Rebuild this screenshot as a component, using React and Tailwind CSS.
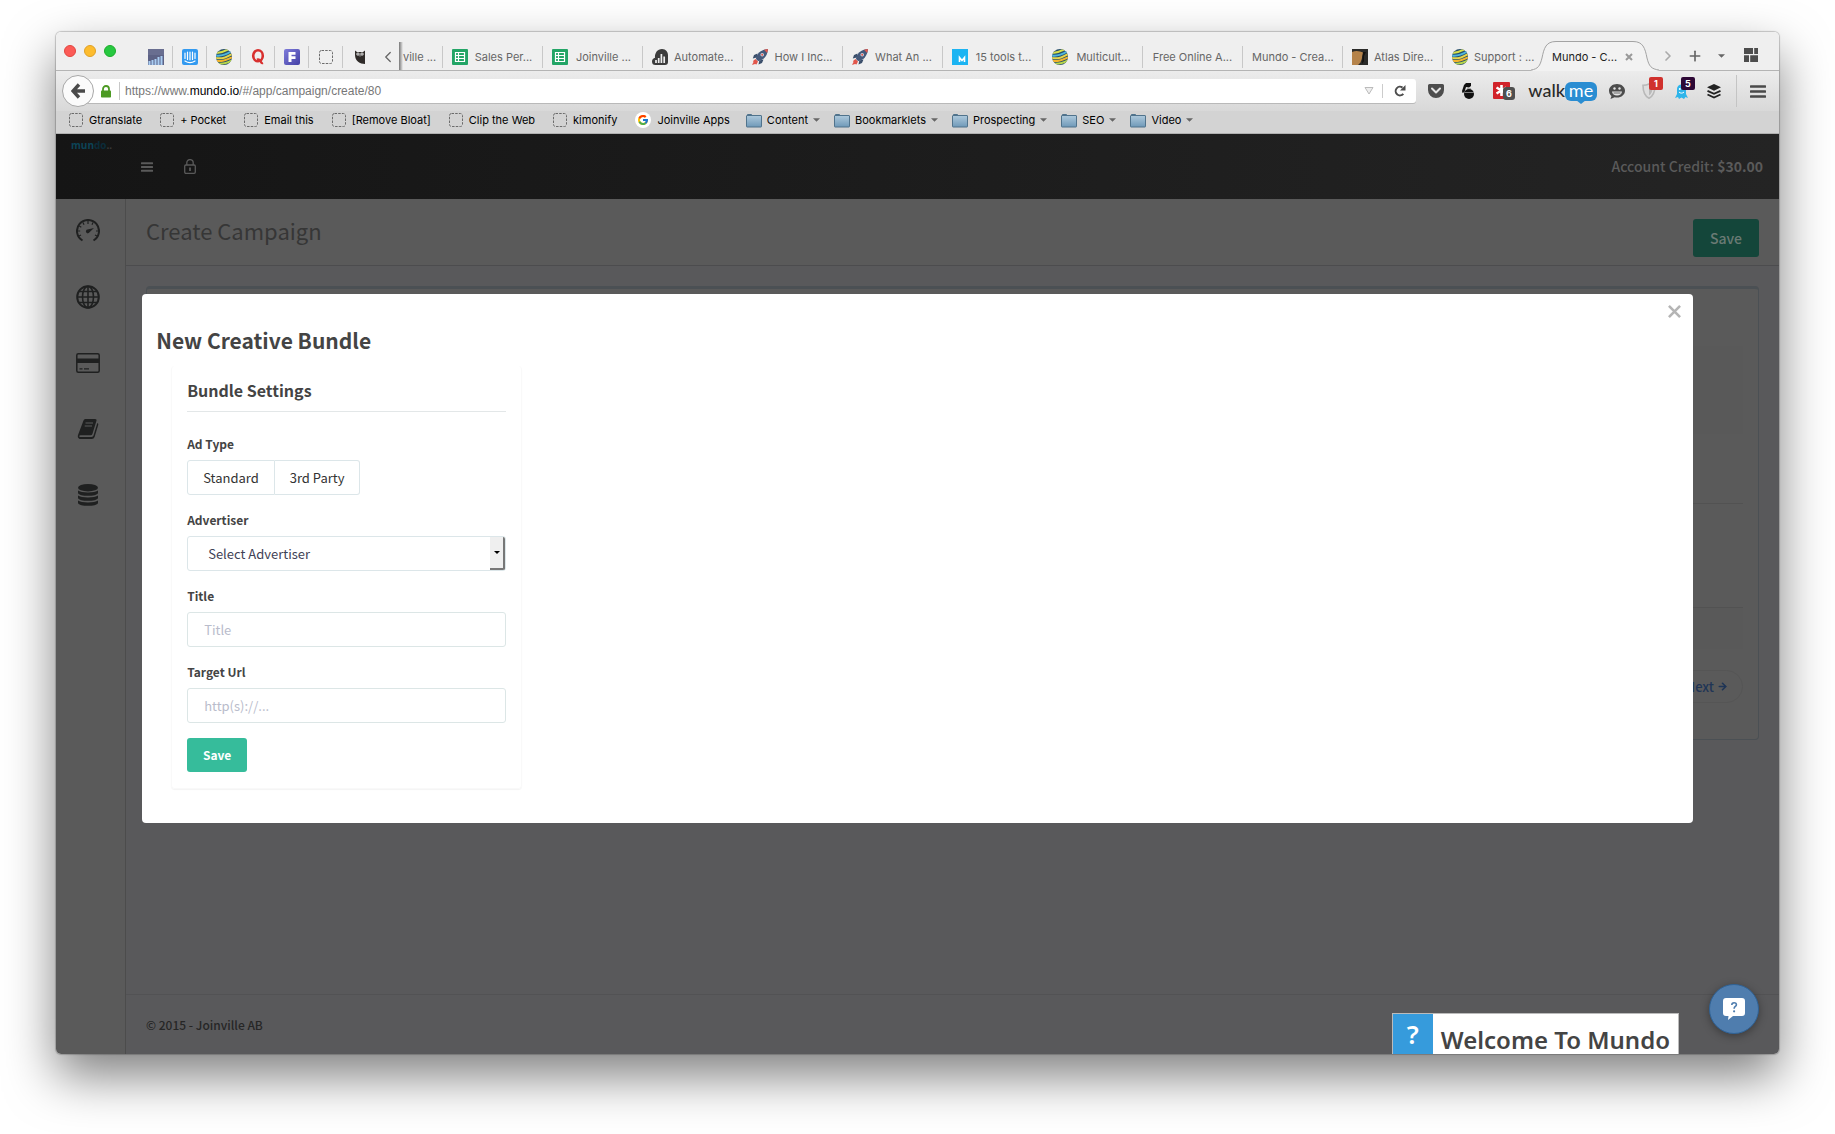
import { useState } from "react";
import { ArrowRight, ChevronLeft, ChevronRight, Plus } from "lucide-react";
import { FcGoogle } from "react-icons/fc";

/* ---------- favicons ---------- */

const AnalyticsIcon = () => (
  <svg viewBox="0 0 16 16" className="size-4 shrink-0">
    <rect width="16" height="16" fill="#5d6285" />
    <path d="M0 1h16M0 3h16M0 5h16" stroke="#777b9b" strokeWidth="1" />
    <path d="M1.500 16v-4M4.500 16v-5M7.500 16v-6M10.500 16v-8M13.500 16v-9" stroke="#a9cdf2" strokeWidth="2" />
  </svg>
);

const IntercomIcon = () => (
  <svg viewBox="0 0 16 16" className="size-4 shrink-0">
    <rect width="16" height="16" rx="2" fill="#339af0" />
    <path d="M3 4v5.500M5.500 3.200v7.300M8 3v7.800M10.500 3.200v7.300M13 4v5.500" stroke="#fff" strokeWidth="1.200" strokeLinecap="round" />
    <path d="M3 12c3 2 7 2 10 0" stroke="#fff" strokeWidth="1.200" fill="none" strokeLinecap="round" />
  </svg>
);

const GlobeStripes = () => (
  <svg viewBox="0 0 16 16" className="size-4 shrink-0">
    <defs>
      <clipPath id="ball"><circle cx="8" cy="8" r="8" /></clipPath>
    </defs>
    <g clipPath="url(#ball)" fill="none" strokeWidth="2">
      <rect width="16" height="16" fill="#29506b" />
      <path d="M0 3.500c5 1 8-1 12-3" stroke="#d7e04a" />
      <path d="M0 6.500c6 1 10-1 15-4" stroke="#4fb6dd" />
      <path d="M0 9c6 1.500 11-1 16-4" stroke="#e6d64a" />
      <path d="M0 11.800c6 1.200 11-1 16-3.500" stroke="#f3b42b" />
      <path d="M1 14.500c5 1 10-.5 15-3" stroke="#b7d64a" />
    </g>
  </svg>
);

const QuoraIcon = () => (
  <svg viewBox="0 0 16 16" className="size-4 shrink-0">
    <ellipse cx="8" cy="6.800" rx="4.800" ry="5.500" fill="none" stroke="#d8302f" strokeWidth="2.600" />
    <path d="M7 10.500c2-.8 3.500 1 4 2.500.4 1 1.300 1.300 2 1" stroke="#d8302f" strokeWidth="2.200" fill="none" />
  </svg>
);

const FIcon = () => (
  <svg viewBox="0 0 16 16" className="size-4 shrink-0">
    <defs>
      <linearGradient id="fbox" x1="0" y1="0" x2="1" y2="1">
        <stop offset="0" stopColor="#7f7cda" />
        <stop offset="1" stopColor="#4340a5" />
      </linearGradient>
    </defs>
    <rect width="16" height="16" rx="2" fill="url(#fbox)" />
    <path d="M4.500 3h7v2.800H7.500v1.400h4V10h-4v3h-3z" fill="#fff" />
  </svg>
);

const DashedIcon = () => (
  <svg viewBox="0 0 14 14" className="size-[14px] shrink-0">
    <rect x=".5" y=".5" width="13" height="13" rx="2" fill="none" stroke="#6b6b6b" strokeDasharray="2.500 1.200" />
  </svg>
);

const OwlIcon = () => (
  <svg viewBox="0 0 16 16" className="size-4 shrink-0">
    <path d="M3 1.500 5 3h6l2-1.500V15c-5 0-10-3-10-9z" fill="#2f2b29" />
    <circle cx="6" cy="5" r="1.600" fill="#fff" />
    <circle cx="10" cy="5" r="1.600" fill="#fff" />
    <circle cx="6" cy="5" r=".7" fill="#222" />
    <circle cx="10" cy="5" r=".7" fill="#222" />
    <path d="m7.300 6.500.7 1.300.7-1.300z" fill="#fff" />
  </svg>
);

const SheetIcon = () => (
  <svg viewBox="0 0 16 16" className="size-4 shrink-0">
    <rect width="16" height="16" rx="1" fill="#23a566" />
    <path d="M3.500 3.500h9v9h-9zM3.500 6.500h9M3.500 9.500h9M6.500 3.500v9" fill="none" stroke="#fff" strokeWidth="1.200" />
  </svg>
);

const CloudChartIcon = () => (
  <svg viewBox="0 0 16 16" className="size-4 shrink-0">
    <path d="M3.500 16A3.500 3.500 0 0 1 0 12.500C0 10.500 1.500 9 3 8.800 2.500 4 5.500 0 10 0c4 0 6 3 6 6.500V13a3 3 0 0 1-3 3z" fill="#3c3c3c" />
    <path d="M4 14v-3M6.700 14V9M9.400 14V5M12.200 14V7.500" stroke="#eee" strokeWidth="1.700" />
  </svg>
);

const RocketIcon = () => (
  <svg viewBox="0 0 16 16" className="size-4 shrink-0">
    <path d="M5.500 4.500 2 6 .8 9.500l4-1zM11.500 10.500 10 14l-3.500 1.500.8-4z" fill="#3b4f6b" />
    <path d="M4 10C4 5 9 .5 16 0c-.5 7-5 12-10 12z" fill="#45597a" />
    <path d="M12 .8 16 0l-.8 4z" fill="#e2574c" />
    <circle cx="10.200" cy="5.800" r="1.800" fill="#cfd6e2" />
    <circle cx="10.200" cy="5.800" r="1" fill="#e2574c" />
    <path d="M3.500 10 1 12l.5 1-1.500 3 3-1 1.500.5L6 12.500z" fill="#e2574c" />
  </svg>
);

const MIcon = () => (
  <svg viewBox="0 0 16 16" className="size-4 shrink-0">
    <rect width="16" height="16" fill="#1cb4f2" />
    <path d="M7.500 13V8.500l2.500 3 2.500-3V13" fill="none" stroke="#fff" strokeWidth="1.600" />
  </svg>
);

const AtlasIcon = () => (
  <svg viewBox="0 0 16 16" className="size-4 shrink-0">
    <rect width="16" height="16" fill="#2b2b29" />
    <path d="M0 3c4-2 8-1 11 .5 0 2-1 3-1 5s-1 3-1.500 5L6 16H0z" fill="#b5834a" />
    <path d="M11 3h3l-2 4v5l-2 3z" fill="#15120f" />
  </svg>
);

/* ---------- browser chrome icons ---------- */

const FolderIcon = () => (
  <svg viewBox="0 0 16 15" className="h-[15px] w-4 shrink-0">
    <defs>
      <linearGradient id="folder" x1="0" y1="0" x2="0" y2="1">
        <stop offset="0" stopColor="#aec9dc" />
        <stop offset="1" stopColor="#6f99b8" />
      </linearGradient>
    </defs>
    <path d="M1.500 3V1.500h4V3" fill="#7fa3bd" stroke="#50738c" />
    <rect x=".5" y="2.500" width="15" height="11.500" rx=".5" fill="url(#folder)" stroke="#50738c" />
  </svg>
);

const Caret = ({ className = "" }) => (
  <svg viewBox="0 0 8 4" className={"h-1 w-[7px] shrink-0 " + className}>
    <path d="M0 0h8L4 4z" fill="#666" />
  </svg>
);

const BackArrow = () => (
  <svg viewBox="0 0 14 16" className="h-4 w-[14px]">
    <path d="M8 1.500 2 8l6 6.500M2.500 8H14" fill="none" stroke="#4a4a4a" strokeWidth="3.400" />
  </svg>
);

const GreenLock = () => (
  <svg viewBox="0 0 10 13" className="h-[13px] w-[10px] shrink-0">
    <path d="M2 6V4a3 3 0 0 1 6 0v2" fill="none" stroke="#4c9a23" strokeWidth="1.800" />
    <rect y="5.500" width="10" height="7" rx=".8" fill="#4c9a23" />
  </svg>
);

const ReloadIcon = () => (
  <svg viewBox="0 0 12 12" className="size-3">
    <path d="M9.300 8.800A4.300 4.300 0 1 1 8.500 2.600" fill="none" stroke="#4d4d4d" strokeWidth="2" />
    <path d="M6 5.500h5.500V0z" fill="#4d4d4d" />
  </svg>
);

const PocketIcon = () => (
  <svg viewBox="0 0 16 14" className="h-[14px] w-4">
    <path d="M1.500 0h13A1.500 1.500 0 0 1 16 1.500V6a8 8 0 0 1-16 0V1.500A1.500 1.500 0 0 1 1.500 0z" fill="#4d4d4d" />
    <path d="m4 4.500 4 4 4-4" fill="none" stroke="#e4e4e4" strokeWidth="2" strokeLinecap="round" strokeLinejoin="round" />
  </svg>
);

const BombIcon = () => (
  <svg viewBox="0 0 12 16" className="h-4 w-3">
    <path d="M4 0h5v3l-2 1.500L4 4 2.500 9 .5 10 0 8l2-6z" fill="#111" />
    <ellipse cx="7" cy="11" rx="5" ry="5" fill="#111" />
    <path d="M2.500 9.500h9.500M5 5.500h4" stroke="#9a9a9a" strokeWidth=".8" />
  </svg>
);

const LastPassIcon = () => (
  <svg viewBox="0 0 22 18" className="h-[18px] w-[22px]">
    <rect width="17" height="17" rx="1" fill="#d1232a" />
    <path d="M8.500 3v11M3.500 5.500l10 6M3.500 11.500l10-6" stroke="#fff" strokeWidth="2.600" />
    <rect x="10" y="5" width="12" height="13" rx="3" fill="#4f4f4f" />
    <text x="16" y="15" textAnchor="middle" fontSize="9" fontWeight="700" fill="#fff" fontFamily="Inter">6</text>
  </svg>
);

const SmileBubble = () => (
  <svg viewBox="0 0 16 15" className="h-[15px] w-4">
    <path d="M8 0c4.500 0 8 2.900 8 6.700s-3.500 6.800-8 6.800c-.8 0-1.600-.1-2.300-.3L1.500 15l1-3C1 10.700 0 8.900 0 6.700 0 2.900 3.500 0 8 0z" fill="#4d4d4d" />
    <path d="M3 7.500h10c-.3 2.500-2.200 4-5 4s-4.700-1.500-5-4z" fill="#e4e4e4" />
    <path d="M4.500 9h7" stroke="#4d4d4d" strokeWidth=".8" />
    <circle cx="5.500" cy="4.500" r="1.200" fill="#e4e4e4" />
    <circle cx="10.500" cy="4.500" r="1.200" fill="#e4e4e4" />
  </svg>
);

const ShieldIcon = () => (
  <svg viewBox="0 0 14 16" className="h-4 w-[14px]">
    <path d="M7 1c2 1 4 1.300 6 1.300C13 9 11.500 13 7 15.300 2.500 13 1 9 1 2.300 3 2.300 5 2 7 1z" fill="#dedede" stroke="#b9b9b9" strokeWidth="1.600" />
    <path d="M7 4v8.500C9.500 11 10.300 8.500 10.500 5 9 5 8 4.600 7 4z" fill="#b9b9b9" />
  </svg>
);

const GhostIcon = () => (
  <svg viewBox="0 0 13 16" className="h-4 w-[13px]">
    <path d="M2 6a4.500 4.500 0 0 1 9 0v5l2 4-2.500-1L9 16l-2.500-1.500L4 16l-1-2-3 1 2-4z" fill="#2fb5ea" />
    <circle cx="4.800" cy="6" r="1" fill="#fff" />
    <path d="M4 9c1.500 1.500 3.500 1.500 5 0" stroke="#fff" fill="none" />
  </svg>
);

const BufferIcon = () => (
  <svg viewBox="0 0 14 15" className="h-[15px] w-[14px]">
    <path d="m7 0 7 3.300-7 3.400-7-3.400z" fill="#222" />
    <path d="m.5 6.800 6.500 3 6.500-3M.5 10.500l6.500 3 6.500-3" fill="none" stroke="#222" strokeWidth="1.900" />
  </svg>
);

const MenuBars = ({ className }) => (
  <svg viewBox="0 0 16 13" className={className}>
    <path d="M1 1.500h14M1 6.500h14M1 11.500h14" stroke="currentColor" strokeWidth="2.600" strokeLinecap="round" />
  </svg>
);

const TilesIcon = () => (
  <svg viewBox="0 0 14 14" className="size-[14px]">
    <path d="M0 0h9v6H0zM10.200 0H14v6h-3.800zM0 7.200h5V14H0zM6.200 7.200H14V14H6.200z" fill="#4d4d4d" />
  </svg>
);

/* ---------- app icons ---------- */

const GaugeIcon = () => (
  <svg viewBox="0 0 24 24" className="size-6">
    <path d="M6.500 21.500a11 11 0 1 1 11 0" fill="none" stroke="currentColor" strokeWidth="2" />
    <path d="M12 2v3M7 3.500l1 2.300M17 3.500l-1 2.300M3.300 7l2 1.200M1.500 12h2.700M20 12h2.500M3 17l2-1M21 17l-2-1" stroke="currentColor" strokeWidth="1.200" />
    <path d="m18 9-4.500 4.300a1.900 1.900 0 1 1-2-2.700z" fill="currentColor" />
  </svg>
);

const WorldIcon = () => (
  <svg viewBox="0 0 24 24" className="size-6" fill="none" stroke="currentColor" strokeWidth="1.600">
    <circle cx="12" cy="12" r="10.800" strokeWidth="2" />
    <ellipse cx="12" cy="12" rx="5.500" ry="10.800" />
    <path d="M12 1v22M1 12h22M3 6.500h18M3 17.500h18" />
  </svg>
);

const CardIcon = () => (
  <svg viewBox="0 0 24 20" className="h-5 w-6">
    <rect x=".8" y=".8" width="22.400" height="18.400" rx="1.500" fill="none" stroke="currentColor" strokeWidth="1.500" />
    <path d="M1 5.500h22V10H1z" fill="currentColor" />
    <path d="M3.500 15.800h3M8 15.800h5" stroke="currentColor" strokeWidth="1.200" />
  </svg>
);

const BookIcon = () => (
  <svg viewBox="0 0 22 20" className="h-5 w-[22px]">
    <path d="M6.500 1.500A2 2 0 0 1 8.300 0H18a1.500 1.500 0 0 1 1.400 2l-4 13a2 2 0 0 1-1.900 1.300H3.500c-1.500 0-1.700 1.700-.3 1.700h11.300a2 2 0 0 0 2-1.400L20.300 4c.9.500 1.200 1 .9 2l-3.600 12a3 3 0 0 1-2.800 2H3.500C1 20 .3 17.500 1.200 15.500z" fill="currentColor" />
    <path d="M8.500 4h7.500M7.700 7H15" stroke="#5a5a5a" strokeWidth="1.200" />
  </svg>
);

const DatabaseIcon = () => (
  <svg viewBox="0 0 20 22" className="h-[22px] w-5" fill="currentColor">
    <ellipse cx="10" cy="3.700" rx="10" ry="3.700" />
    <path d="M0 6.500c3 2.600 17 2.600 20 0V9c-1 3.800-19 3.800-20 0zM0 11.500c3 2.600 17 2.600 20 0V14c-1 3.800-19 3.800-20 0zM0 16.500c3 2.600 17 2.600 20 0V19c-1 3.800-19 3.800-20 0z" />
  </svg>
);

const HeaderLock = () => (
  <svg viewBox="0 0 12 15" className="h-[15px] w-3" fill="none" stroke="currentColor" strokeWidth="1.300">
    <path d="M2.800 6V3.800a3.200 3.200 0 0 1 6.400 0V6" />
    <rect x=".7" y="6" width="10.600" height="8.300" rx="1.200" />
    <path d="M6 8.500v3.500" strokeWidth="1.800" />
  </svg>
);

const ChatHelp = () => (
  <svg viewBox="0 0 22 22" className="size-[22px]">
    <path d="M3 0h16a3 3 0 0 1 3 3v12a3 3 0 0 1-3 3h-9l-5 4 .5-4H3a3 3 0 0 1-3-3V3a3 3 0 0 1 3-3z" fill="#fff" />
    <path d="M8.800 7c0-3 4.600-3 4.600-.3 0 1.800-2.300 1.800-2.300 4" fill="none" stroke="#4f7dae" strokeWidth="1.600" />
    <circle cx="11.100" cy="13.300" r="1.100" fill="#4f7dae" />
  </svg>
);

/* ---------- data ---------- */

const pinned = [AnalyticsIcon, IntercomIcon, GlobeStripes, QuoraIcon, FIcon, DashedIcon, OwlIcon];

const tabs = [
  { icon: SheetIcon, title: "Sales Per..." },
  { icon: SheetIcon, title: "Joinville ..." },
  { icon: CloudChartIcon, title: "Automate..." },
  { icon: RocketIcon, title: "How I Inc..." },
  { icon: RocketIcon, title: "What An ..." },
  { icon: MIcon, title: "15 tools t..." },
  { icon: GlobeStripes, title: "Multicult..." },
  { title: "Free Online A..." },
  { title: "Mundo - Crea..." },
  { icon: AtlasIcon, title: "Atlas Dire..." },
  { icon: GlobeStripes, title: "Support : ..." },
];

const bookmarks = ["Gtranslate", "+ Pocket", "Email this", "[Remove Bloat]", "Clip the Web", "kimonify"];
const folders = ["Content", "Bookmarklets", "Prospecting", "SEO", "Video"];

const nav = [
  { label: "Dashboard", icon: GaugeIcon },
  { label: "Campaigns", icon: WorldIcon },
  { label: "Billing", icon: CardIcon },
  { label: "Reports", icon: BookIcon },
  { label: "Data", icon: DatabaseIcon },
];

/* ---------- browser ---------- */

function TabStrip() {
  return (
    <div className="flex h-[39px] items-end border-b border-[#b4b4b4] bg-[#efefef] text-[11px] text-[#666]">
      <div className="flex gap-2 self-start pt-[13px] pl-2">
        <span className="size-3 rounded-full border border-[#e2463f] bg-[#fc5b57]" />
        <span className="size-3 rounded-full border border-[#e0a126] bg-[#fdbc2e]" />
        <span className="size-3 rounded-full border border-[#1dad2b] bg-[#27c840]" />
      </div>
      <div className="ml-[23px] flex h-6 items-start">
        {pinned.map((Icon, i) => (
          <span
            key={i}
            className="flex h-[22px] w-[34px] items-center justify-center border-r border-[#c8c8c8] last:border-r-0"
          >
            <Icon />
          </span>
        ))}
      </div>
      <button aria-label="Scroll tabs left" className="mb-1 flex h-[18px] w-[22px] items-center justify-center">
        <ChevronLeft className="size-[18px] text-[#666]" strokeWidth={1.75} />
      </button>
      <span className="h-[28px] w-1 bg-linear-to-r from-[#777] to-[#efefef]" />
      <div className="flex h-6 flex-1">
        <button className="h-[22px] w-10 border-r border-[#c8c8c8] text-left whitespace-nowrap">ville ...</button>
        {tabs.map((t, i) => (
          <button
            key={i}
            className={
              "flex h-[22px] w-[100px] shrink-0 items-center gap-1.5 px-[9px] whitespace-nowrap " +
              (i < tabs.length - 1 ? "border-r border-[#c8c8c8]" : "")
            }
          >
            {t.icon && <t.icon />}
            <span className="flex-1 text-center">{t.title}</span>
          </button>
        ))}
        <div className="relative flex h-[22px] w-[102px] shrink-0 items-center gap-2 pl-[9px] text-[#222]">
          <svg viewBox="0 0 128 30" className="absolute -top-[5px] -left-3 h-[30px] w-[128px]">
            <path
              d="M0 29.500c7-1 9-4 11-12C13 7 15 1 25 1h77c10 0 12 6 14 16.500 2 8 4 11 12 12V30H0z"
              fill="#f2f2f2"
            />
            <path
              d="M0 29c7-1 9-4 11-12C13 7 15 .5 25 .5h77c10 0 12 6.500 14 16.500 2 8 4 11 12 12"
              fill="none"
              stroke="#a3a3a3"
            />
          </svg>
          <span className="relative whitespace-nowrap">Mundo - C...</span>
          <button aria-label="Close tab" className="relative">
            <svg viewBox="0 0 8 8" className="size-2">
              <path d="m1 1 6 6M7 1 1 7" stroke="#999" strokeWidth="2" />
            </svg>
          </button>
        </div>
      </div>
      <div className="flex h-[22px] items-start gap-[11px] pr-[21px] text-[#666]">
        <ChevronRight className="size-4 text-[#aaa]" strokeWidth={2.5} />
        <Plus className="size-4" strokeWidth={2.500} />
        <Caret className="mx-1 mt-[6px]" />
        <span className="ml-1">
          <TilesIcon />
        </span>
      </div>
    </div>
  );
}

function Toolbar() {
  return (
    <div className="flex h-[40px] items-center bg-linear-to-b from-[#ececec] to-[#d8d8d8] pr-[13px] pl-[6px]">
      <button
        aria-label="Back"
        className="z-10 flex size-8 shrink-0 items-center justify-center rounded-full border border-[#a8a8a8] bg-[#fbfbfb]"
      >
        <BackArrow />
      </button>
      <div className="-ml-3 flex h-6 flex-1 items-center rounded-r-[3px] bg-white pl-[19px] shadow-[0_1px_0_#b9b9b9]">
        <GreenLock />
        <span className="mr-[5px] ml-2 h-[18px] w-px bg-[#c8c8c8]" />
        <span className="flex-1 font-['Liberation_Sans'] text-[12px] text-[#777]">
          https://www.<span className="text-black">mundo.io</span>/#/app/campaign/create/80
        </span>
        <svg viewBox="0 0 10 8" className="h-2 w-[10px]">
          <path d="M1 .5h8L5 7z" fill="#eee" stroke="#bbb" />
        </svg>
        <span className="mr-[11px] ml-[8px] h-[14px] w-px bg-[#ccc]" />
        <button aria-label="Reload" className="mr-[10px]">
          <ReloadIcon />
        </button>
      </div>
      <div className="flex items-center">
        <span className="ml-3"><PocketIcon /></span>
        <span className="ml-[18px]"><BombIcon /></span>
        <span className="ml-[19px]"><LastPassIcon /></span>
        <span className="ml-[13px] flex items-start">
          <span className="font-['Lato'] text-[18px] leading-4 font-medium text-[#2a2a2a]">walk</span>
          <span className="relative flex h-[19px] w-8 items-center justify-center rounded-[6px] bg-[#2a8dd2] pb-[3px] font-['Lato'] text-[18px] leading-4 text-white">
            me
            <svg viewBox="0 0 10 4" className="absolute top-[18px] left-[11px] h-1 w-[10px]">
              <path d="M0 0h10L5 4z" fill="#2a8dd2" />
            </svg>
          </span>
        </span>
        <span className="ml-3"><SmileBubble /></span>
        <span className="relative ml-[17px]">
          <ShieldIcon />
          <span className="absolute -top-[6px] left-[7px] flex h-[13px] w-[14px] items-center justify-center rounded-[2px] bg-[#d0312d] text-[9px] font-bold text-white">1</span>
        </span>
        <span className="relative ml-[19px]">
          <GhostIcon />
          <span className="absolute -top-[6px] left-[6px] flex h-[13px] w-[14px] items-center justify-center rounded-[2px] bg-[#2e0836] text-[9px] font-bold text-white">5</span>
        </span>
        <span className="ml-[19px]"><BufferIcon /></span>
        <span className="ml-[15px] h-8 w-px bg-[#c4c4c4]" />
        <button aria-label="Menu" className="ml-[13px] text-[#4a4a4a]">
          <MenuBars className="h-[13px] w-4" />
        </button>
      </div>
    </div>
  );
}

function BookmarksBar() {
  return (
    <div className="flex h-[23px] items-center border-b border-[#b0b0b0] bg-[#d3d3d3] pb-1 pl-[13px] text-[11px] whitespace-nowrap text-black">
      {bookmarks.map((b) => (
        <a key={b} href="#" className="mr-[18px] flex items-center gap-1.5">
          <DashedIcon />
          {b}
        </a>
      ))}
      <a href="#" className="mr-4 flex items-center gap-1.5">
        <span className="rounded-full bg-white p-[2px]">
          <FcGoogle className="size-3" />
        </span>
        Joinville Apps
      </a>
      {folders.map((f) => (
        <button key={f} className="mr-[14px] flex items-center gap-[5px]">
          <FolderIcon />
          {f}
          <Caret />
        </button>
      ))}
    </div>
  );
}

/* ---------- mundo app ---------- */

function AppHeader() {
  return (
    <header className="flex h-[65px] items-center justify-between bg-linear-to-r from-[#151515] to-[#242424] pr-4 pl-[15px] text-[#5a5a5a]">
      <div className="flex h-full">
        <a href="#" className="w-[70px] pt-1 font-['Open_Sans'] text-[10px] leading-[14px] font-bold text-[#0c4458]">
          mun<span className="text-[#0b2c3a]">do</span><span className="text-[#3a3a3a]">..</span>
        </a>
        <button aria-label="Toggle menu">
          <MenuBars className="h-[10px] w-3" />
        </button>
        <button aria-label="Lock" className="ml-[31px]">
          <HeaderLock />
        </button>
      </div>
      <p className="text-[14px] font-medium">
        Account Credit: <strong className="font-bold">$30.00</strong>
      </p>
    </header>
  );
}

function CampaignPage() {
  return (
    <main className="flex flex-1 flex-col bg-[#59595b]">
      <div className="flex h-[67px] items-start justify-between border-b border-[#4c4c4e] bg-[#5a5a5a] px-5">
        <h1 className="pt-4 text-[22px] leading-[30px] text-[#363636]">Create Campaign</h1>
        <button className="mt-5 h-[38px] w-[66px] rounded-[3px] bg-[#14463a] text-[14px] font-medium text-[#6a7a74]">
          Save
        </button>
      </div>
      <section className="mx-5 mt-5 rounded-[4px] border border-t-[3px] border-[#4b5054] bg-[#5a5a5a] px-[15px] pt-[57px] pb-9">
        <div className="h-[88px] bg-[#595959]" />
        <div className="mt-[69px] h-[105px] border-y border-[#525252]" />
        <div className="h-[41px] bg-[#595959]" />
        <div className="mt-[21px] flex justify-end">
          <a href="#" className="flex items-center gap-[3px] rounded-full border border-[#555] px-[14px] text-[13px] leading-[31px] font-medium text-[#1f3556]">
            Next
            <ArrowRight className="size-[11px]" strokeWidth={3.5} />
          </a>
        </div>
      </section>
      <footer className="mt-auto flex h-[60px] items-center border-t border-[#525254] px-5 text-[12px] font-medium text-[#262626]">
        © 2015 - Joinville AB
      </footer>
    </main>
  );
}

function Field({ id, label, children }) {
  return (
    <div className="mb-[15px]">
      <label htmlFor={id} className="mb-1.5 block text-[12px] leading-5 font-bold">{label}</label>
      {children}
    </div>
  );
}

function BundleModal() {
  const [type, setType] = useState(null);
  const [form, setForm] = useState({ advertiser: "", title: "", url: "" });

  return (
    <div role="dialog" aria-labelledby="modal-title" className="relative w-[90%] rounded-[4px] bg-white px-[14px] pt-[30px] pb-[34px] text-[#444]">
      <button aria-label="Close" className="absolute top-[11px] right-3">
        <svg viewBox="0 0 14 14" className="size-[13px]">
          <path d="m1 1 12 12M13 1 1 13" stroke="#b5b5b5" strokeWidth="2.800" />
        </svg>
      </button>
      <h2 id="modal-title" className="text-[21px] leading-8 font-bold">New Creative Bundle</h2>
      <form
        onSubmit={(e) => e.preventDefault()}
        className="mt-[10px] ml-[15px] w-[351px] rounded-[4px] border border-t-0 border-[#f9f9f9] px-[15px] pt-3 pb-4 shadow-[0_1px_1px_#f4f4f4]"
      >
        <h3 className="border-b border-[#e3e7e8] pb-[9px] text-[16px] leading-6 font-bold">Bundle Settings</h3>
        <div className="mt-[22px] mb-[15px]">
          <span id="ad-type" className="mb-1.5 block text-[12px] leading-5 font-bold">Ad Type</span>
          <div role="group" aria-labelledby="ad-type" className="flex">
            {["Standard", "3rd Party"].map((t) => (
              <button
                key={t}
                type="button"
                aria-pressed={type === t}
                onClick={() => setType(t)}
                className="h-[35px] border border-[#dce6e9] px-[15px] text-[13px] text-[#333] first:rounded-l-[3px] last:rounded-r-[3px] last:border-l-0"
              >
                {t}
              </button>
            ))}
          </div>
        </div>
        <Field id="advertiser" label="Advertiser">
          <div className="relative">
            <select
              id="advertiser"
              value={form.advertiser}
              onChange={(e) => setForm({ ...form, advertiser: e.target.value })}
              className="h-[35px] w-full appearance-none rounded-[3px] border border-[#dce6e9] bg-white pl-5 text-[13px] text-[#3f4256]"
            >
              <option value="">Select Advertiser</option>
            </select>
            <span className="pointer-events-none absolute top-px right-px flex h-[33px] w-[15px] items-center justify-center rounded-r-[2px] border-r-2 border-b-2 border-[#777] bg-[#efefef]">
              <svg viewBox="0 0 6 3" className="h-[3px] w-[6px]">
                <path d="M0 0h6L3 3z" fill="#000" />
              </svg>
            </span>
          </div>
        </Field>
        <Field id="title" label="Title">
          <input
            id="title"
            placeholder="Title"
            value={form.title}
            onChange={(e) => setForm({ ...form, title: e.target.value })}
            className="h-[35px] w-full rounded-[3px] border border-[#dce6e6] px-4 text-[13px] placeholder:text-[#b9bccb]"
          />
        </Field>
        <Field id="url" label="Target Url">
          <input
            id="url"
            placeholder="http(s)://..."
            value={form.url}
            onChange={(e) => setForm({ ...form, url: e.target.value })}
            className="h-[35px] w-full rounded-[3px] border border-[#dce6e6] px-4 text-[13px] placeholder:text-[#b9bccb]"
          />
        </Field>
        <button className="h-[34px] w-[60px] rounded-[3px] bg-[#36bc9b] text-[12px] font-bold text-white">
          Save
        </button>
      </form>
    </div>
  );
}

export default function App() {
  return (
    <div className="flex min-h-screen flex-col bg-white px-14 pt-8 pb-20 font-['Inter',sans-serif]">
      <div className="flex flex-1 flex-col overflow-hidden rounded-[5px] shadow-[0_0_1px_1px_rgba(0,0,0,0.2),0_22px_50px_rgba(0,0,0,0.5)]">
        <TabStrip />
        <Toolbar />
        <BookmarksBar />
        <div className="relative flex flex-1 flex-col font-['Noto_Sans_CJK_SC',sans-serif]">
          <AppHeader />
          <div className="flex flex-1">
            <nav className="flex w-[70px] flex-col items-center gap-[42px] border-r border-[#4c4c4c] bg-[#5a5a5a] pt-5 pr-[5px] text-[#1f2020]">
              {nav.map(({ label, icon: Icon }) => (
                <a key={label} href="#" aria-label={label} className="flex h-6 items-center">
                  <Icon />
                </a>
              ))}
            </nav>
            <CampaignPage />
          </div>

          <div className="absolute inset-0 flex items-start justify-center pt-40">
            <BundleModal />
          </div>

          <div className="absolute right-[100px] bottom-0 flex h-[41px] border border-b-0 border-[#bbb] bg-white font-['Noto_Sans']">
            <span className="flex w-10 items-center justify-center bg-[#369bdc] text-[26px] leading-8 font-semibold text-white">?</span>
            <span className="px-2 pt-[14px] text-[24px] leading-6 font-semibold text-[#444]">Welcome To Mundo</span>
          </div>
          <button
            aria-label="Help"
            className="absolute right-5 bottom-5 flex size-[50px] items-center justify-center rounded-full border border-[#2f6296] bg-[#4f7dae] shadow-[0_2px_8px_rgba(0,0,0,0.35)]"
          >
            <ChatHelp />
          </button>
        </div>
      </div>
    </div>
  );
}
